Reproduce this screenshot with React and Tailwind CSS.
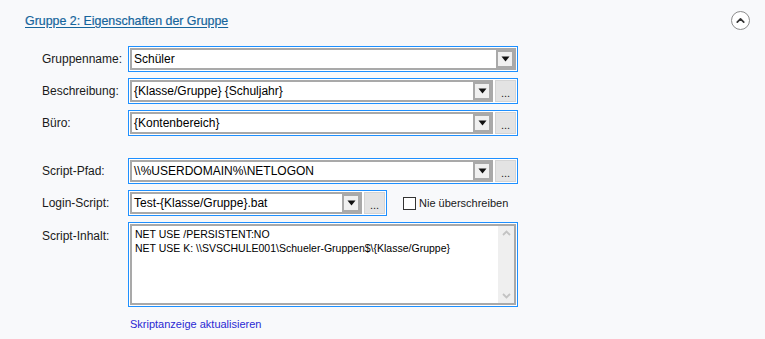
import { ChevronUp } from "lucide-react";

function Arrow() {
  return (
    <svg width="9" height="6" viewBox="0 0 9 6">
      <path d="M0.5 0.5h8L4.5 5.5z" fill="#111" />
    </svg>
  );
}

function SelectBox({ value }) {
  return (
    <div className="flex-1 min-w-0 border-2 border-[#a9a9a9] bg-white flex items-center">
      <span className="flex-1 pl-[2px] text-[12px] text-black whitespace-nowrap overflow-hidden">{value}</span>
      <div className="w-[18px] h-full border-2 border-[#a9a9a9] bg-[#f0f0f0] flex items-center justify-center">
        <Arrow />
      </div>
    </div>
  );
}

function DotsButton() {
  return (
    <div className="w-[21px] border border-[#d4d4d4] bg-[#e3e3e3] flex items-center justify-center text-[11px] text-[#222] leading-none pt-[4px]">
      ...
    </div>
  );
}

function Field({ value, dots = true, width = "w-[390px]" }) {
  return (
    <div className={`${width} h-[26px] border border-[#1e90ff] p-px flex gap-[2px] bg-white`}>
      <SelectBox value={value} />
      {dots && <DotsButton />}
    </div>
  );
}

function Label({ children, top }) {
  return (
    <div className={`w-[86px] text-[12px] text-[#1a1a1a] ${top ? "pt-[5px]" : "h-[26px] flex items-center"}`}>
      {children}
    </div>
  );
}

export default function App() {
  return (
    <div className="w-[765px] h-[339px] bg-[#f8f9fb] overflow-hidden" style={{ fontFamily: '"Liberation Sans", Arial, sans-serif' }}>
      <div className="h-[41px] pl-[25px] pr-[15px] flex items-center justify-between">
        <a className="text-[12.4px] text-[#16659c] underline underline-offset-2 pt-px [-webkit-text-stroke:0.2px_#16659c]">Gruppe 2: Eigenschaften der Gruppe</a>
        <div className="w-[19px] h-[19px] rounded-full border border-[#8c8c8c] bg-white flex items-center justify-center">
          <ChevronUp size={13} strokeWidth={3.2} className="text-[#333] -mt-px" />
        </div>
      </div>

      <div className="pl-[42px] pt-[5px] flex flex-col">
        <div className="flex items-center">
          <Label>Gruppenname:</Label>
          <Field value="Schüler" dots={false} />
        </div>
        <div className="flex items-center mt-[6px]">
          <Label>Beschreibung:</Label>
          <Field value="{Klasse/Gruppe} {Schuljahr}" />
        </div>
        <div className="flex items-center mt-[6px]">
          <Label>Büro:</Label>
          <Field value="{Kontenbereich}" />
        </div>

        <div className="flex items-center mt-[22px]">
          <Label>Script-Pfad:</Label>
          <Field value="\\%USERDOMAIN%\NETLOGON" />
        </div>
        <div className="flex items-center mt-[6px]">
          <Label>Login-Script:</Label>
          <Field value="Test-{Klasse/Gruppe}.bat" width="w-[259px]" />
          <label className="ml-[16px] flex items-center gap-[3px] text-[11px] text-[#1a1a1a]">
            <span className="w-[13px] h-[13px] border border-[#333] bg-white" />
            Nie überschreiben
          </label>
        </div>
        <div className="flex items-start mt-[6px]">
          <Label top>Script-Inhalt:</Label>
          <div className="w-[390px] h-[85px] border border-[#1e90ff] p-px bg-white">
            <div className="h-full border-2 border-[#a9a9a9] bg-white flex">
              <div className="flex-1 pl-[3px] pt-[1px] text-[10.5px] leading-[14px] text-black whitespace-nowrap overflow-hidden">
                <div>NET USE /PERSISTENT:NO</div>
                <div>NET USE K: \\SVSCHULE001\Schueler-Gruppen$\{"{"}Klasse/Gruppe{"}"}</div>
              </div>
              <div className="w-[16px] bg-[#efefef] flex flex-col items-center justify-between py-[4px]">
                <svg width="9" height="6" viewBox="0 0 9 6">
                  <path d="M1 5l3.5-3.5L8 5" fill="none" stroke="#c3c3c3" strokeWidth="1.8" />
                </svg>
                <svg width="9" height="6" viewBox="0 0 9 6">
                  <path d="M1 1l3.5 3.5L8 1" fill="none" stroke="#c3c3c3" strokeWidth="1.8" />
                </svg>
              </div>
            </div>
          </div>
        </div>
        <div className="pl-[88px] mt-[4px]">
          <a className="text-[11px] text-[#2a2ad4]">Skriptanzeige aktualisieren</a>
        </div>
      </div>
    </div>
  );
}
